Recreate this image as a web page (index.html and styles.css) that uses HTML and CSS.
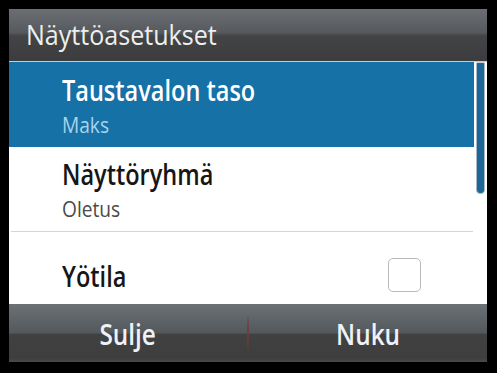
FILE: index.html
```html
<!DOCTYPE html>
<html lang="fi">
<head>
<meta charset="utf-8">
<title>Näyttöasetukset</title>
<link rel="stylesheet" href="styles.css">
</head>
<body>
<div class="panel">
  <header class="header">
    <h1 class="header-title"><span class="narrow">Näyttöasetukset</span></h1>
  </header>
  <div class="body">
    <ul class="list">
      <li class="row row-selected">
        <div class="row-text">
          <span class="row-title"><span class="narrow">Taustavalon taso</span></span>
          <span class="row-sub"><span class="narrow">Maks</span></span>
        </div>
      </li>
      <li class="row row-divided">
        <div class="row-text">
          <span class="row-title"><span class="narrow">Näyttöryhmä</span></span>
          <span class="row-sub"><span class="narrow">Oletus</span></span>
        </div>
      </li>
      <li class="row row-check">
        <div class="row-text">
          <span class="row-title"><span class="narrow">Yötila</span></span>
        </div>
        <span class="checkbox"></span>
      </li>
    </ul>
    <div class="scroll-track">
      <div class="scroll-thumb"></div>
    </div>
  </div>
  <footer class="footer">
    <button class="footer-btn"><span class="narrow narrow-center">Sulje</span></button>
    <span class="footer-sep"></span>
    <button class="footer-btn"><span class="narrow narrow-center">Nuku</span></button>
  </footer>
</div>
</body>
</html>
```
FILE: styles.css
```css
html, body {
  margin: 0;
  padding: 0;
  background: #000;
}
body {
  font-family: "Open Sans", "DejaVu Sans", sans-serif;
  padding: 9px 10px 0 9px;
  height: 373px;
  box-sizing: border-box;
}
.narrow {
  display: inline-block;
  transform: scaleX(0.87);
  transform-origin: left center;
  white-space: nowrap;
}
.narrow-center {
  transform-origin: center center;
}
.panel {
  width: 478px;
  height: 353px;
  display: flex;
  flex-direction: column;
  background: #fff;
  overflow: hidden;
}
.header {
  height: 53px;
  flex: none;
  box-sizing: border-box;
  background: linear-gradient(to bottom, #6b6e72 0%, #56595d 45%, #434446 52%, #3c3c3e 100%);
  border-bottom: 1px solid #c9cdd1;
  padding-left: 17px;
  display: flex;
  align-items: center;
}
.header-title {
  margin: 0;
  font-size: 28px;
  font-weight: 400;
  color: #eeeeee;
  line-height: 1;
  padding-bottom: 3px;
}
.header-title .narrow {
  transform: scaleX(0.895);
}
.body {
  flex: 1;
  display: flex;
  min-height: 0;
}
.list {
  list-style: none;
  margin: 0;
  padding: 0;
  flex: 1;
  min-width: 0;
}
.row {
  height: 85px;
  box-sizing: border-box;
  display: flex;
  align-items: center;
  padding-left: 53px;
  padding-right: 53px;
}
.row-text {
  flex: 1;
  display: flex;
  flex-direction: column;
}
.row-title {
  font-size: 28px;
  font-weight: 600;
  line-height: 38px;
  color: #161616;
}
.row-title .narrow {
  transform: scaleX(0.84);
}
.row-sub {
  font-size: 22px;
  font-weight: 400;
  line-height: 30px;
  color: #4a4a4a;
}
.row-selected {
  background: #1571a6;
}
.row-selected .row-title {
  color: #ffffff;
}
.row-selected .row-sub {
  color: #a8d3ee;
}
.row-divided {
  border-bottom: 1px solid #e3cfcf;
  margin: 0 1px 0 2px;
  padding-left: 51px;
}
.row-check .row-title {
  padding-top: 2px;
}
.checkbox {
  width: 31px;
  height: 32px;
  border: 1.5px solid #b9b9b9;
  border-radius: 5px;
  flex: none;
}
.scroll-track {
  width: 13px;
  flex: none;
  padding-left: 2px;
  box-sizing: border-box;
}
.scroll-thumb {
  width: 9px;
  height: 132px;
  box-sizing: border-box;
  background: #1b6898;
  border: 1px solid #a9b8c4;
  border-top-color: #c7d0d8;
  border-radius: 2px 2px 5px 5px;
}
.footer {
  height: 58px;
  flex: none;
  display: flex;
  align-items: center;
  background: linear-gradient(to bottom, #6c7176 0%, #53585c 50%, #414142 52%, #3e3e3e 93%, #4a4a4a 100%);
}
.footer-btn {
  flex: 1;
  height: 100%;
  background: transparent;
  border: 0;
  padding: 0;
  font-family: inherit;
  font-size: 29px;
  font-weight: 600;
  color: #eef2f7;
  line-height: 1;
}
.footer-btn .narrow {
  transform: scaleX(0.84);
}
.footer-sep {
  width: 2px;
  height: 34px;
  flex: none;
  background: linear-gradient(to bottom, rgba(120,60,60,0.2), #6b3d3d 40%, rgba(120,60,60,0.3));
}
```
